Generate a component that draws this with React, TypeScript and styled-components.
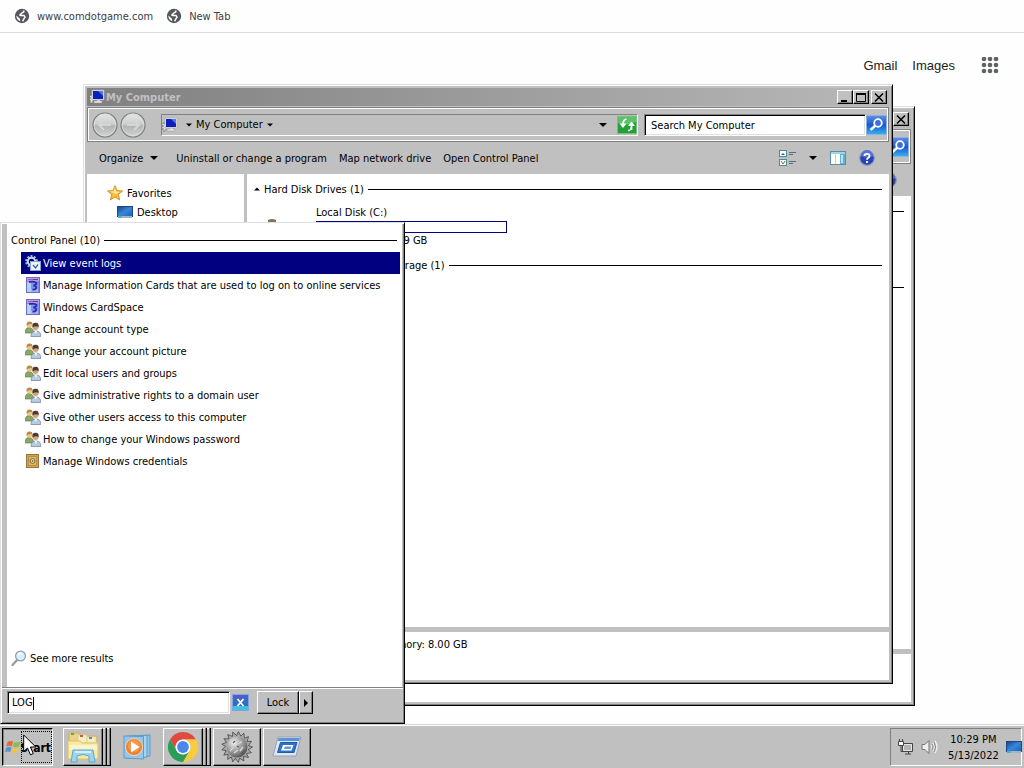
import React from "react";
import styled, { createGlobalStyle, css } from "styled-components";

const UI_FONT = '"DejaVu Sans Condensed", "DejaVu Sans", sans-serif';
const SILVER = "#c0c0c0";
const NAVY = "#000080";

const GlobalStyle = createGlobalStyle`
  *, *::before, *::after { box-sizing: border-box; }
  body { margin: 0; background: #fefefe; font: 11px/14px ${UI_FONT}; color: #000; }
  button, input { font: inherit; color: inherit; margin: 0; border-radius: 0; }
  ul, h2, h3, p { margin: 0; padding: 0; font: inherit; list-style: none; }
  svg { display: block; flex: none; }
`;

const raised = css`
  border: 1px solid;
  border-color: #fff #000 #000 #fff;
  box-shadow: inset -1px -1px #808080;
  background: ${SILVER};
`;
const sunken = css`
  border: 1px solid;
  border-color: #808080 #fff #fff #808080;
`;
const field = css`
  ${sunken}
  box-shadow: inset 1px 1px #000, inset -1px -1px #dfdfdf;
  background: #fff;
`;
/* Captions sit a touch low beside their icons. */
const Caption = styled.span`
  padding-top: 2px;
`;

/* ---------- page ---------- */
const Desktop = styled.div`
  position: relative;
  display: flex;
  flex-direction: column;
  min-height: 100vh;
  overflow: hidden;
`;
const Bookmarks = styled.nav`
  display: flex;
  gap: 13px;
  height: 33px;
  padding: 0 14px;
  align-items: center;
  border-bottom: 1px solid #dcdcdc;
`;
const Bookmark = styled.a`
  display: flex;
  align-items: center;
  gap: 7px;
  color: #3c4043;
  text-decoration: none;
`;
const PageHeader = styled.header`
  display: flex;
  flex: 1;
  justify-content: flex-end;
  align-items: flex-start;
  gap: 15px;
  padding: 24px 25px;
  font: 13px/18px "Liberation Sans", Arial, sans-serif;
`;
const PageLink = styled.a`
  color: #222;
  text-decoration: none;
`;
const AppsButton = styled.button`
  border: 0;
  padding: 0;
  margin-left: 11px;
  background: none;
`;

/* ---------- explorer window ---------- */
const Frame = styled.section<{ $step: number }>`
  position: absolute;
  left: ${(p) => 83 + p.$step * 22}px;
  right: ${(p) => 131 - p.$step * 22}px;
  top: ${(p) => 84 + p.$step * 22}px;
  bottom: ${(p) => 84 - p.$step * 22}px;
  display: flex;
  flex-direction: column;
  padding: 3px;
  background: ${SILVER};
  border: 1px solid;
  border-color: #dfdfdf #000 #000 #dfdfdf;
  box-shadow: inset 1px 1px #fff, inset -1px -1px #808080;
`;
const TitleBar = styled.header`
  display: flex;
  align-items: center;
  height: 18px;
  padding: 0 2px;
  background: linear-gradient(90deg, #808080, #b8b8b8);
`;
const Title = styled.h2`
  flex: 1;
  margin-left: 1px;
  padding-top: 1px;
  color: ${SILVER};
  font-weight: bold;
`;
const CaptionButton = styled.button<{ $apart?: boolean }>`
  ${raised}
  display: flex;
  align-items: center;
  justify-content: center;
  width: 16px;
  height: 14px;
  padding: 0;
  margin-left: ${(p) => (p.$apart ? 2 : 0)}px;
`;
const AddressRow = styled.div`
  display: flex;
  align-items: center;
  height: 35px;
  margin-top: 1px;
  padding: 0 1px 0 3px;
  border: 1px solid #808080;
  box-shadow: inset 1px 1px #fff, inset -1px -1px #fff;
`;
const RoundButton = styled.button`
  width: 28px;
  height: 28px;
  padding: 1px;
  border: 0;
  background: none;
`;
const Address = styled.div`
  ${sunken}
  display: flex;
  flex: 1;
  align-items: center;
  height: 22px;
  margin: 0 6px 0 14px;
`;
const Crumb = styled.span`
  flex: 1;
  display: flex;
  align-items: center;
  gap: 4px;
  margin-left: 8px;
`;
const PlainButton = styled.button`
  display: flex;
  align-items: center;
  gap: 7px;
  padding: 0;
  border: 0;
  background: none;
`;
const DropButton = styled(PlainButton)`
  margin-right: 10px;
`;
const SearchBox = styled.input`
  ${field}
  width: 222px;
  height: 22px;
  padding: 1px 6px 0;
  &::placeholder { color: #000; opacity: 1; }
`;
const CommandBar = styled.div`
  display: flex;
  align-items: center;
  gap: 12px;
  height: 32px;
  padding: 0 14px 0 12px;
`;
const MenuButton = styled(PlainButton)`
  margin-right: 6px;
`;
const Tools = styled.div`
  display: flex;
  align-items: center;
  gap: 13px;
  margin-left: auto;
`;
const Panes = styled.div`
  display: flex;
  flex: 1;
  min-height: 0;
  background: #fff;
`;
const NavPane = styled.nav`
  width: 160px;
  padding: 9px 0 0 20px;
  border-right: 3px solid ${SILVER};
`;
const NavItem = styled.a<{ $child?: boolean }>`
  display: flex;
  align-items: center;
  gap: 4px;
  height: 19px;
  padding-left: ${(p) => (p.$child ? 10 : 0)}px;
  color: #000;
  text-decoration: none;
`;
const FilePane = styled.div`
  flex: 1;
  padding: 7px 7px;
`;
const GroupTitle = styled.h3`
  display: flex;
  align-items: center;
  gap: 4px;
  height: 16px;
  white-space: nowrap;
  &::after {
    content: "";
    flex: 1;
    height: 1px;
    background: #000;
  }
`;
const Drive = styled.div`
  display: flex;
  gap: 4px;
  height: 60px;
  padding: 9px 0 0 10px;
`;
const DriveIcon = styled.div`
  width: 48px;
  padding-top: 13px;
`;
const DriveInfo = styled.div`
  width: 191px;
`;
const Capacity = styled.div`
  height: 12px;
  margin: 1px 0;
  padding-top: 1px;
  border: 1px solid ${NAVY};
`;
const Used = styled.div`
  height: 100%;
  background: ${NAVY};
`;
const Details = styled.footer`
  height: 53px;
  padding: 6px 0 0 295px;
  border-top: 5px solid ${SILVER};
  background: #fff;
`;

/* ---------- start menu ---------- */
const StartMenu = styled.section`
  position: absolute;
  left: 0;
  bottom: 44px;
  display: flex;
  flex-direction: column;
  width: 405px;
  height: 502px;
  padding: 1px;
  border: 1px solid;
  border-color: #dfdfdf #000 #000 #dfdfdf;
  box-shadow: inset 1px 1px #fff, inset -1px -1px #808080;
  background: ${SILVER};
`;
const Results = styled.div`
  display: flex;
  flex: 1;
  flex-direction: column;
  margin: 0 1px 0 5px;
  padding: 8px 2px 0 4px;
  background: #fff;
  & > h3 { margin-right: 3px; }
`;
const ResultList = styled.ul`
  flex: 1;
  margin: 4px 0 0 10px;
`;
const Result = styled.button<{ $active?: boolean }>`
  display: flex;
  align-items: center;
  gap: 2px;
  width: 100%;
  height: 22px;
  padding: 0 4px;
  border: 0;
  background: ${(p) => (p.$active ? NAVY : "transparent")};
  color: ${(p) => (p.$active ? "#fff" : "#000")};
  white-space: nowrap;
`;
const IconSlot = styled.span`
  display: flex;
  justify-content: center;
  width: 16px;
`;
const MoreResults = styled(PlainButton)`
  gap: 3px;
  margin-bottom: 21px;
`;
const MenuFooter = styled.div`
  display: flex;
  align-items: center;
  padding: 3px 5px 8px;
  border-top: 1px solid #808080;
  box-shadow: inset 0 1px #fff;
`;
const QueryBox = styled.label`
  ${field}
  display: flex;
  align-items: center;
  width: 223px;
  height: 23px;
  padding: 1px 4px 0;
`;
const Query = styled.input`
  field-sizing: content;
  padding: 0;
  border: 0;
  outline: 0;
  background: none;
`;
const Caret = styled.span`
  width: 1px;
  height: 13px;
  background: #000;
`;
const ClearButton = styled(PlainButton)`
  margin: 0 8px 0 2px;
`;
const PushButton = styled.button<{ $width: number }>`
  ${raised}
  display: flex;
  align-items: center;
  justify-content: center;
  width: ${(p) => p.$width}px;
  height: 23px;
  padding: 0;
`;

/* ---------- taskbar ---------- */
const Taskbar = styled.footer`
  position: relative;
  display: flex;
  gap: 2px;
  height: 44px;
  padding: 4px 2px 2px;
  background: ${SILVER};
  box-shadow: inset 0 1px #d4d4d4, inset 0 2px #fff;
`;
const StartButton = styled.button`
  display: flex;
  align-items: center;
  width: 51px;
  padding: 0 0 0 2px;
  margin-right: 8px;
  border: 1px solid;
  border-color: #000 #fff #fff #000;
  box-shadow: inset 1px 1px #808080;
  background: ${SILVER};
  font-weight: bold;
  font-size: 12px;
`;
const StartLabel = styled.span`
  display: flex;
  align-items: center;
  justify-content: flex-end;
  width: 31px;
  height: 32px;
  border: 1px dotted #000;
`;
const TaskStack = styled.div`
  display: flex;
  width: 48px;
`;
const TaskButton = styled.button<{ $flat?: boolean }>`
  ${(p) => (p.$flat ? "border: 0; background: none;" : raised)}
  display: flex;
  flex: 1;
  align-items: center;
  justify-content: center;
  padding: 0;
`;
const StackEdge = styled.span`
  width: 4px;
  border: solid #000;
  border-width: 0 1px 1px 0;
  box-shadow: inset -1px 0 #808080, inset 0 1px #fff;
`;
const Tray = styled.div`
  ${sunken}
  display: flex;
  align-items: center;
  gap: 7px;
  width: 132px;
  margin-left: auto;
  padding-left: 6px;
`;
const Clock = styled.time`
  flex: 1;
  padding: 1px 0 0 3px;
  line-height: 16px;
  text-align: center;
  white-space: nowrap;
`;
const Pointer = styled.div`
  position: absolute;
  left: 23px;
  top: 10px;
  pointer-events: none;
`;

/* ---------- icons ---------- */
const Arrow = ({ w = 8, dir = "down" }: { w?: number; dir?: "down" | "up" | "right" }) => {
  const d = { down: "M0 2H8L4 6Z", up: "M0 6H8L4 2Z", right: "M2 0V8L6 4Z" }[dir];
  return <svg width={w} height={w} viewBox="0 0 8 8"><path d={d} /></svg>;
};
const Globe = () => (
  <svg width="16" height="16" viewBox="0 0 16 16">
    <circle cx="8" cy="8" r="7.200" fill="#55585c" />
    <path d="M9.500 2.500C10.500 3.500 9.500 4.600 8.300 4.600C7.300 5 7.800 6 6.500 6.300C5.500 6.600 5.800 7.600 6.800 7.600H9.500C10.700 7.900 11.500 9 10.500 10C9.500 10.700 9.600 12 8.500 13.200" fill="none" stroke="#fff" strokeWidth="1.500" />
    <path d="M2.400 7.500L5.800 10.600L6.300 13.200A5.600 5.600 0 0 1 2.400 7.500Z" fill="#fff" />
  </svg>
);
const AppsGrid = () => (
  <svg width="18" height="18" viewBox="0 0 18 18" fill="#5f6368">
    {[3, 9, 15].map((y) => [3, 9, 15].map((x) => <circle key={`${x}-${y}`} cx={x} cy={y - 1} r="2.300" />))}
  </svg>
);
const Computer = () => (
  <svg width="16" height="16" viewBox="0 0 16 16">
    <path d="M1 6H4V14H1Z" fill="#ddd" stroke="#777" strokeDasharray="2 1" />
    <rect x="3" y="1" width="12" height="10" fill="#e8e4da" stroke="#aaa" strokeWidth=".6" />
    <rect x="4" y="2" width="10" height="8" fill="#0a1fc0" />
    <path d="M9 2H14V7Z" fill="#4f78f0" />
    <path d="M8 11H11V12H13V14H5V12H8Z" fill="#e4e4e4" stroke="#999" strokeWidth=".5" />
  </svg>
);
const RoundArrow = ({ forward }: { forward?: boolean }) => (
  <svg width="26" height="26" viewBox="0 0 26 26">
    <defs>
      <linearGradient id="orb" x2="0" y2="1">
        <stop stopColor="#e6e6e6" /><stop offset=".45" stopColor="#cdcece" />
        <stop offset=".55" stopColor="#b2b4b4" /><stop offset="1" stopColor="#d5d6d6" />
      </linearGradient>
    </defs>
    <circle cx="13" cy="13" r="12" fill="url(#orb)" stroke="#7d8181" strokeWidth="1.200" />
    <circle cx="13" cy="13" r="10.800" fill="none" stroke="#dedede" strokeWidth=".8" />
    <path d={forward ? "M7 13H19M14 8L19 13L14 18" : "M19 13H7M12 8L7 13L12 18"} fill="none" stroke="#d4d5d5" strokeWidth="2" />
  </svg>
);
const Refresh = () => (
  <svg width="20" height="18" viewBox="0 0 20 18">
    <rect x=".5" y=".5" width="19" height="17" fill="#25a038" stroke="#6fc27a" />
    <path d="M1 1H19V6Q10 11 1 7Z" fill="#5cc268" />
    <path d="M9.500 3Q6 4 6 8M14.500 14V9" fill="none" stroke="#fff" strokeWidth="1.700" />
    <path d="M2.500 7.500H9.500L6 12ZM11 10H18L14.500 5.500Z" fill="#fff" />
    <path d="M11 14.500Q14 14.500 14.500 11" fill="none" stroke="#fff" strokeWidth="1.500" />
  </svg>
);
const SearchGlyph = () => (
  <svg width="21" height="20" viewBox="0 0 21 20">
    <defs>
      <linearGradient id="srch" x2="0" y2="1">
        <stop stopColor="#5f8fe6" /><stop offset=".5" stopColor="#1e55cf" /><stop offset="1" stopColor="#37b4ee" />
      </linearGradient>
    </defs>
    <rect x=".5" y=".5" width="20" height="19" rx="1" fill="url(#srch)" stroke="#86b4ea" />
    <circle cx="12" cy="8" r="3.800" fill="#3a6fdd" stroke="#fff" strokeWidth="1.800" />
    <path d="M9.500 10.500L4.500 15" stroke="#fff" strokeWidth="2.400" />
  </svg>
);
const ViewList = () => (
  <svg width="17" height="16" viewBox="0 0 17 16">
    <rect x=".5" y=".5" width="7" height="6" fill="#fff" stroke="#4e8a98" />
    <rect x=".5" y="9.500" width="7" height="6" fill="#fff" stroke="#4e8a98" />
    <path d="M2 5L4 3L6 5Z" fill="#27618e" /><path d="M2 11L4 14L6 11" stroke="#5c8a1e" fill="none" />
    <path d="M10 2.500H17M10 4.500H14M10 11.500H17M10 13.500H14" stroke="#5c6a80" />
  </svg>
);
const PreviewPane = () => (
  <svg width="16" height="14" viewBox="0 0 16 14">
    <rect x=".5" y=".5" width="15" height="13" fill="#fff" stroke="#5590a8" />
    <path d="M1 1H15V3H1Z" fill="#a9d3e4" /><path d="M10 3H15V13H10Z" fill="#60b2d4" /><path d="M11 4H13V12H11Z" fill="#bce5f3" />
    <path d="M5.500 3V13" stroke="#ccc" />
  </svg>
);
const Help = () => (
  <svg width="16" height="16" viewBox="0 0 16 16">
    <circle cx="8" cy="8" r="7.300" fill="#2743b4" stroke="#8c98bf" strokeWidth="1.200" />
    <path d="M2 6A6 6 0 0 1 14 6Q8 9 2 6" fill="#5573d4" />
    <path d="M5.500 6Q5.500 3.800 8 3.800T10.500 6Q10.500 7 9 8Q8 8.600 8 9.800M8 11V13" fill="none" stroke="#fff" strokeWidth="1.800" />
  </svg>
);
const Star = () => (
  <svg width="16" height="16" viewBox="0 0 16 16">
    <path d="M8 .7L10 5.600L15.500 6L11.300 9.500L12.700 15L8 12L3.300 15L4.700 9.500L.5 6L6 5.600Z" fill="#f9bb3c" stroke="#dc9128" />
    <path d="M8 2.500L9.200 6.500L13 7L9 9L5 7.500L3 6.600L6.700 6.300Z" fill="#ffe89a" />
  </svg>
);
const Screen = () => (
  <svg width="16" height="14" viewBox="0 0 16 14">
    <defs>
      <linearGradient id="scr" x2="1" y2="1">
        <stop stopColor="#123f8c" /><stop offset=".5" stopColor="#3a86d8" /><stop offset="1" stopColor="#1d5fb4" />
      </linearGradient>
    </defs>
    <rect x=".5" y="1.500" width="15" height="10" fill="url(#scr)" stroke="#1c468a" />
    <path d="M1 12H15" stroke="#9fb4c8" strokeWidth="2" /><path d="M1 12H5" stroke="#47b8c8" strokeWidth="2" />
  </svg>
);
const DiskIcon = () => (
  <svg width="20" height="16" viewBox="0 0 20 16">
    <path d="M4 1Q8 -1 12 1V5H4Z" fill="#85705c" /><rect y="5" width="20" height="10" fill="#b8b8b8" stroke="#777" />
  </svg>
);
const EventGear = () => (
  <svg width="16" height="16" viewBox="0 0 16 16">
    <circle cx="6.500" cy="6.500" r="5.200" fill="none" stroke="#9db6de" strokeWidth="2.400" strokeDasharray="2 1.270" />
    <circle cx="6.500" cy="6.500" r="3.700" fill="none" stroke="#c9daf2" strokeWidth="2" />
    <rect x="5.500" y="6.500" width="10" height="9" fill="#eef4fb" stroke="#7fa3cd" />
    <path d="M8 10L10.500 13L13 9.500" fill="none" stroke="#35679f" strokeWidth="1.300" />
  </svg>
);
const CardSpace = () => (
  <svg width="14" height="16" viewBox="0 0 14 16">
    <rect x=".5" y=".5" width="13" height="15" fill="#7f8ff2" stroke="#6a6cc4" />
    <path d="M1 1H13V4H1Z" fill="#b9a0da" /><path d="M1 5H5V15H1Z" fill="#b3d0fd" /><path d="M5 12H12V15H5Z" fill="#9fb4fa" />
    <path d="M3 5Q9 4 10.500 6Q10.500 8 7.500 8.500Q11 9 10 11.500Q9 13 6.500 12.500" fill="none" stroke="#2b2ba8" strokeWidth="1.800" />
    <path d="M2 2.500H7" stroke="#c05595" /><path d="M7 2.500H12" stroke="#5d3fa6" />
  </svg>
);
const Users = () => (
  <svg width="16" height="16" viewBox="0 0 16 16">
    <path d="M0 12Q0 6.500 4 6.500T9 12Z" fill="#8aa765" stroke="#5b7a43" strokeWidth=".6" />
    <circle cx="4.500" cy="3.800" r="2.800" fill="#ecc796" /><path d="M1.500 4.500Q1.300 .5 4.500 .5T7.500 3.500Q5 2 1.500 4.500" fill="#b98b3e" />
    <path d="M6 15.500Q6 10 11 10T15.700 15.500Z" fill="#b9cbe0" stroke="#6a7f99" strokeWidth=".7" />
    <circle cx="10.500" cy="6" r="3" fill="#d5a377" /><path d="M7.600 6.500Q6.500 2 10.500 1.800T13.500 6.500Q12 4 7.600 6.500" fill="#4c3b2c" />
    <path d="M9.700 10L11 13L12 10Z" fill="#fff" />
  </svg>
);
const Vault = () => (
  <svg width="14" height="14" viewBox="0 0 14 14">
    <rect x=".5" y=".5" width="12" height="13" fill="#d3a44c" stroke="#96743a" />
    <rect x="2.500" y="2.500" width="8" height="9" fill="#dfb766" stroke="#b78f48" />
    <circle cx="6.500" cy="7" r="2.500" fill="#e5d09e" stroke="#8a6b36" /><circle cx="6.500" cy="7" r=".8" fill="#5f4822" />
  </svg>
);
const Magnifier = () => (
  <svg width="16" height="16" viewBox="0 0 16 16">
    <path d="M6.500 9.500L1.500 15" stroke="#98979c" strokeWidth="2.200" strokeLinecap="round" />
    <circle cx="9.500" cy="6" r="4.900" fill="#dcf0fb" stroke="#8c9db0" strokeWidth="1.200" />
    <path d="M7 5Q8 3 10 3" stroke="#fff" strokeWidth="1.300" fill="none" />
  </svg>
);
const ClearGlyph = () => (
  <svg width="17" height="17" viewBox="0 0 17 17">
    <rect x=".5" y=".5" width="16" height="16" fill="#2f6fc6" stroke="#7fa7df" />
    <path d="M1 1H16V7H1Z" fill="#4a62c4" /><path d="M1 12H16V16H1Z" fill="#43bfe2" />
    <path d="M5.500 5L11.500 12M11.500 5L5.500 12" stroke="#fff" strokeWidth="1.800" />
  </svg>
);
const Flag = () => (
  <svg width="16" height="16" viewBox="0 0 16 16">
    <path d="M2.500 3Q5 1 8 2.600L6.800 7.300Q4 6 1.200 7.800Z" fill="#e06a3c" />
    <path d="M9 3Q12 4.500 15.500 2.500L14 7.500Q11 9 7.800 7.600Z" fill="#8cbb52" />
    <path d="M1 9Q3.500 7.200 6.500 8.500L5.200 13Q2.500 11.800 0 13.500Z" fill="#5a8fd6" />
    <path d="M7.500 9Q10.500 10.300 13.700 8.700L12.400 13.200Q9.500 15 6.300 13.600Z" fill="#efc548" />
  </svg>
);
const Folder = () => (
  <svg width="34" height="32" viewBox="0 0 34 32">
    <path d="M3 2H13L15 5H31V26H3Z" fill="#ecd283" stroke="#cdb060" />
    <path d="M12 4H21V12H12Z" fill="#f4eec6" stroke="#d9c98a" strokeWidth=".6" /><path d="M21 6H30V12H21Z" fill="#f4eec6" stroke="#d9c98a" strokeWidth=".6" />
    <path d="M5 3H8" stroke="#69a05a" strokeWidth="2" /><path d="M14 5H17" stroke="#d4543a" strokeWidth="2" /><path d="M23 7H26" stroke="#5b86b8" strokeWidth="2" />
    <path d="M2 10H14L16 12H32V28H2Z" fill="#f8ea9f" stroke="#dcc36d" /><path d="M3 14H31V19H3Z" fill="#fcf5cb" />
    <path d="M7 19H27L29 31H23V25Q17 22 11 25V31H5Z" fill="#9cd5ee" stroke="#5aa9d0" /><path d="M9 21H25" stroke="#d3effa" strokeWidth="2" />
  </svg>
);
const MediaPlayer = () => (
  <svg width="28" height="26" viewBox="0 0 28 26">
    <path d="M8 2L27 1V22L8 24Z" fill="#8fc3e8" stroke="#5e9bcb" /><path d="M4 2L24 1.500V23L4 24.500Z" fill="#a9d5f1" stroke="#5e9bcb" />
    <path d="M1 2L20.500 2.500V25L1 24Z" fill="#93c8ec" stroke="#5e9bcb" />
    <circle cx="11" cy="13" r="8.500" fill="#ea8434" stroke="#f7d3af" /><circle cx="11" cy="12" r="6" fill="#f09c52" />
    <path d="M8 7.500L16.500 13L8 18.500Z" fill="#fff" />
  </svg>
);
const Chrome = () => (
  <svg width="32" height="32" viewBox="0 0 32 32">
    <path d="M3 8.500A15 15 0 0 1 29 8.500H16A7.500 7.500 0 0 0 9.500 12.250Z" fill="#df4a3e" />
    <path d="M3 8.500L9.500 19.750A7.500 7.500 0 0 1 16 8.500Z" fill="#df4a3e" />
    <path d="M29 8.500A15 15 0 0 1 16 31L22.500 19.750A7.500 7.500 0 0 0 16 8.500Z" fill="#fbcb3c" />
    <path d="M3 8.500L9.500 19.750A7.500 7.500 0 0 0 22.500 19.750L16 31A15 15 0 0 1 3 8.500Z" fill="#2a9d58" />
    <circle cx="16" cy="16" r="7.500" fill="#fff" /><circle cx="16" cy="16" r="5.900" fill="#4a86ee" />
  </svg>
);
const gearPoints = Array.from({ length: 34 }, (_, i) => {
  const r = i % 2 ? 11.5 : 15.5;
  const a = ((i + (i % 2 ? 0.3 : 0)) * Math.PI) / 17;
  return `${(16 + r * Math.cos(a)).toFixed(1)},${(16 + r * Math.sin(a)).toFixed(1)}`;
}).join(" ");
const SpikyGear = () => (
  <svg width="32" height="32" viewBox="0 0 32 32">
    <defs>
      <radialGradient id="steel" cx=".35" cy=".3" r=".75">
        <stop stopColor="#f4f4f4" /><stop offset=".4" stopColor="#b0b0b0" /><stop offset=".75" stopColor="#808080" /><stop offset="1" stopColor="#505050" />
      </radialGradient>
    </defs>
    <polygon points={gearPoints} fill="#a8a8a8" stroke="#444" strokeWidth=".8" />
    <circle cx="16" cy="16" r="10.500" fill="url(#steel)" />
    <path d="M9 20L12 17M13 22L17 19M19 20L22 16M18 12L21 11" stroke="#d8d8d8" strokeWidth="1.500" fill="none" />
    <path d="M12 12L14 10M20 23L24 19M16 15L18 16" stroke="#5a5a5a" strokeWidth="1.300" fill="none" />
  </svg>
);
const RunBox = () => (
  <svg width="30" height="22" viewBox="0 0 30 22">
    <path d="M6 1H29L24 20H1Z" fill="#dfe7f1" stroke="#93a2b8" /><path d="M6.500 2H28L27.200 5H5.700Z" fill="#5d94d6" />
    <path d="M8.500 6.500H25L22 16.500H5.500Z" fill="#2f72cc" stroke="#2759a1" /><path d="M11 9H21.500L19.500 14.500H9Z" fill="#fff" />
    <path d="M13 10.500H19.500L18.500 13H12Z" fill="#5b97e0" />
  </svg>
);
const Network = () => (
  <svg width="17" height="16" viewBox="0 0 17 16">
    <path d="M5.500 4.500H15.500V12.500H5.500Z" fill="#b4b4b4" stroke="#444" /><path d="M6.500 5.500H14.500V11.500H6.500Z" fill="none" stroke="#e6e6e6" />
    <path d="M8 15H14M11.500 13V15" stroke="#444" /><path d="M1.500 2.500H6.500V6.500H1.500Z" fill="#fff" stroke="#444" />
    <path d="M2.500 0V2M5.500 0V2M4 7V12.500H6" stroke="#444" fill="none" />
  </svg>
);
const Speaker = () => (
  <svg width="17" height="16" viewBox="0 0 17 16">
    <path d="M1 5.500H4L8 1.500V14.500L4 10.500H1Z" fill="#eee" stroke="#777" />
    <path d="M10 5.500Q12 8 10 10.500M12 3.500Q15 8 12 12.500M14 2Q18 8 14 14" fill="none" stroke="#eee" strokeWidth="1.400" />
    <path d="M10.800 5Q13 8 10.800 11M13 3Q16 8 13 13" fill="none" stroke="#777" strokeWidth=".8" />
  </svg>
);
const Cursor = () => (
  <svg width="14" height="22" viewBox="0 0 14 22">
    <path d="M.7 1V17.500L4.500 14L7.500 20.800L10.300 19.600L7.400 13H12.800Z" fill="#fff" stroke="#000" />
  </svg>
);

/* ---------- composition ---------- */
const driveContents = (
  <>
    <DriveIcon><DiskIcon /></DriveIcon>
    <DriveInfo>
      <p>Local Disk (C:)</p>
      <Capacity><Used style={{ width: "35%" }} /></Capacity>
      <p>8.7 GB free of 59.9 GB</p>
    </DriveInfo>
  </>
);

/* A covered window keeps its chrome and rules but leaves out its labels. */
function Explorer({ step, covered }: { step: number; covered?: boolean }) {
  return (
    <Frame $step={step} aria-label="My Computer">
      <TitleBar>
        <Computer />
        <Title>{!covered && "My Computer"}</Title>
        <CaptionButton aria-label="Minimize"><svg width="10" height="9"><path d="M1 7H7V9H1Z" /></svg></CaptionButton>
        <CaptionButton aria-label="Maximize"><svg width="10" height="9"><path d="M.5 1H9.500M.5 0V8.500H9.500V0" fill="none" stroke="#000" /><path d="M0 0H10V2H0Z" /></svg></CaptionButton>
        <CaptionButton $apart aria-label="Close"><svg width="10" height="9"><path d="M1 .5L9 8.500M9 .5L1 8.500" stroke="#000" strokeWidth="1.500" /></svg></CaptionButton>
      </TitleBar>
      <AddressRow>
        <RoundButton aria-label="Back"><RoundArrow /></RoundButton>
        <RoundButton aria-label="Forward"><RoundArrow forward /></RoundButton>
        <Address>
          <Computer />
          <Crumb><Arrow w={6} />{!covered && "My Computer"}<Arrow w={6} /></Crumb>
          <DropButton aria-label="Previous locations"><Arrow /></DropButton>
          <PlainButton aria-label="Refresh"><Refresh /></PlainButton>
        </Address>
        <SearchBox aria-label="Search My Computer" placeholder={covered ? "" : "Search My Computer"} />
        <PlainButton aria-label="Search"><SearchGlyph /></PlainButton>
      </AddressRow>
      <CommandBar>
        {!covered && (
          <>
            <MenuButton><Caption>Organize</Caption><Arrow /></MenuButton>
            <PlainButton><Caption>Uninstall or change a program</Caption></PlainButton>
            <PlainButton><Caption>Map network drive</Caption></PlainButton>
            <PlainButton><Caption>Open Control Panel</Caption></PlainButton>
          </>
        )}
        <Tools>
          <PlainButton aria-label="Change view"><ViewList /></PlainButton>
          <PlainButton aria-label="More views"><Arrow /></PlainButton>
          <PlainButton aria-label="Preview pane"><PreviewPane /></PlainButton>
          <PlainButton aria-label="Help"><Help /></PlainButton>
        </Tools>
      </CommandBar>
      <Panes>
        <NavPane>
          {!covered && (
            <>
              <NavItem href="#favorites"><Star /><Caption>Favorites</Caption></NavItem>
              <NavItem href="#desktop" $child><Screen /><Caption>Desktop</Caption></NavItem>
            </>
          )}
        </NavPane>
        <FilePane>
          <GroupTitle><Arrow w={6} dir="up" />{!covered && <Caption>Hard Disk Drives (1)</Caption>}</GroupTitle>
          <Drive>{!covered && driveContents}</Drive>
          <GroupTitle><Arrow w={6} dir="up" />{!covered && <Caption>Devices with Removable Storage (1)</Caption>}</GroupTitle>
        </FilePane>
      </Panes>
      <Details>{!covered && "Memory: 8.00 GB"}</Details>
    </Frame>
  );
}

const results: [string, () => React.JSX.Element][] = [
  ["View event logs", EventGear],
  ["Manage Information Cards that are used to log on to online services", CardSpace],
  ["Windows CardSpace", CardSpace],
  ["Change account type", Users],
  ["Change your account picture", Users],
  ["Edit local users and groups", Users],
  ["Give administrative rights to a domain user", Users],
  ["Give other users access to this computer", Users],
  ["How to change your Windows password", Users],
  ["Manage Windows credentials", Vault],
];

export default function App() {
  return (
    <Desktop>
      <GlobalStyle />
      <Bookmarks>
        <Bookmark href="#comdotgame"><Globe /><Caption>www.comdotgame.com</Caption></Bookmark>
        <Bookmark href="#newtab"><Globe /><Caption>New Tab</Caption></Bookmark>
      </Bookmarks>
      <PageHeader>
        <PageLink href="#gmail">Gmail</PageLink>
        <PageLink href="#images">Images</PageLink>
        <AppsButton aria-label="Apps"><AppsGrid /></AppsButton>
      </PageHeader>
      <Explorer step={1} covered />
      <Explorer step={0} />
      <StartMenu aria-label="Start menu">
        <Results>
          <GroupTitle><Caption>Control Panel (10)</Caption></GroupTitle>
          <ResultList>
            {results.map(([label, Icon], i) => (
              <li key={label}>
                <Result $active={i === 0}><IconSlot><Icon /></IconSlot><Caption>{label}</Caption></Result>
              </li>
            ))}
          </ResultList>
          <MoreResults><Magnifier /><Caption>See more results</Caption></MoreResults>
        </Results>
        <MenuFooter>
          <QueryBox>
            <Query aria-label="Search programs and files" defaultValue="LOG" />
            <Caret />
          </QueryBox>
          <ClearButton aria-label="Clear"><ClearGlyph /></ClearButton>
          <PushButton $width={42}>Lock</PushButton>
          <PushButton $width={14} aria-label="Shut down options"><Arrow dir="right" /></PushButton>
        </MenuFooter>
      </StartMenu>
      <Taskbar>
        <StartButton><Flag /><StartLabel><Caption>Start</Caption></StartLabel></StartButton>
        <TaskStack><TaskButton aria-label="Windows Explorer"><Folder /></TaskButton><StackEdge /><StackEdge /></TaskStack>
        <TaskStack><TaskButton $flat aria-label="Media Player"><MediaPlayer /></TaskButton></TaskStack>
        <TaskStack><TaskButton aria-label="Chrome"><Chrome /></TaskButton><StackEdge /><StackEdge /></TaskStack>
        <TaskStack><TaskButton aria-label="Process tool"><SpikyGear /></TaskButton></TaskStack>
        <TaskStack><TaskButton aria-label="Run"><RunBox /></TaskButton></TaskStack>
        <Tray>
          <Network />
          <Speaker />
          <Clock>10:29 PM<br />5/13/2022</Clock>
          <Screen />
        </Tray>
        <Pointer><Cursor /></Pointer>
      </Taskbar>
    </Desktop>
  );
}
